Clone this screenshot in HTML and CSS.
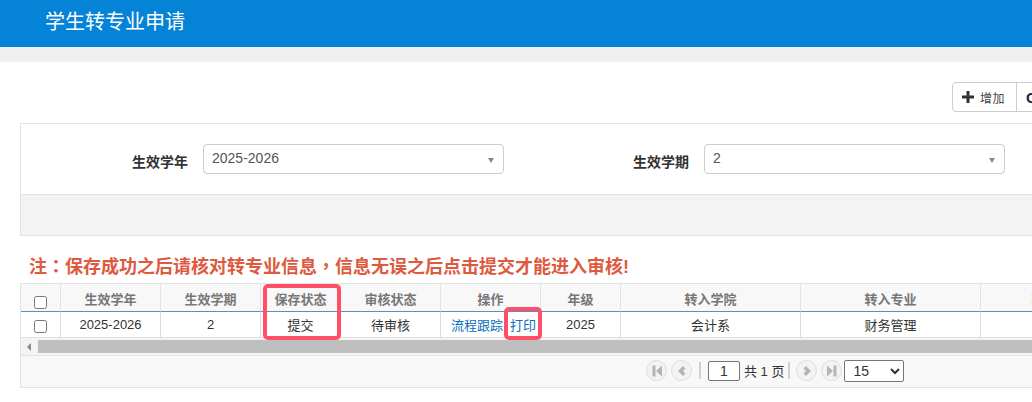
FILE: index.html
```html
<!DOCTYPE html>
<html lang="zh-CN">
<head>
<meta charset="utf-8">
<title>学生转专业申请</title>
<link rel="stylesheet" href="styles.css">
</head>
<body>
<div class="page">
  <header class="topbar"><h1 class="title">学生转专业申请</h1></header>
  <div class="strip"></div>
  <main class="content">
    <div class="toolbar">
      <button class="tool tool-add" type="button">
        <svg class="plus" viewBox="0 0 12 12" width="12" height="12"><path d="M4.5 0h3v4.5H12v3H7.5V12h-3V7.5H0v-3h4.5z"/></svg>
        <span>增加</span>
      </button>
      <button class="tool tool-next" type="button"><span class="tool-glyph">O</span></button>
    </div>
    <section class="panel">
      <div class="form-row">
        <div class="field">
          <label class="field-label">生效学年</label>
          <div class="fake-select"><span>2025-2026</span><i class="caret"></i></div>
        </div>
        <div class="field">
          <label class="field-label">生效学期</label>
          <div class="fake-select"><span>2</span><i class="caret"></i></div>
        </div>
      </div>
      <div class="panel-foot"></div>
    </section>
    <p class="note">注<span class="punct" lang="zh-TW">：</span>保存成功之后请核对转专业信息<span class="punct" lang="zh-TW">，</span>信息无误之后点击提交才能进入审核!</p>
    <section class="grid-wrap">
      <table class="grid">
        <colgroup>
          <col class="c40"><col class="c100"><col class="c100"><col class="c80"><col class="c100"><col class="c100"><col class="c80"><col class="c180"><col class="c180"><col class="c154">
        </colgroup>
        <thead>
          <tr>
            <th><input class="check check-head" type="checkbox"></th>
            <th>生效学年</th><th>生效学期</th><th>保存状态</th><th>审核状态</th><th>操作</th><th>年级</th><th>转入学院</th><th>转入专业</th><th>转入班级</th>
          </tr>
        </thead>
        <tbody>
          <tr>
            <td><input class="check" type="checkbox"></td>
            <td>2025-2026</td><td>2</td><td>提交</td><td>待审核</td>
            <td class="ops"><a href="#">流程跟踪</a><a class="print" href="#">打印</a></td>
            <td>2025</td><td>会计系</td><td>财务管理</td><td></td>
          </tr>
        </tbody>
      </table>
      <div class="scrollbar">
        <span class="scroll-arrow"></span>
        <div class="scroll-thumb"></div>
      </div>
      <div class="pager">
        <button class="pg" type="button"><svg viewBox="0 0 12 12" width="12" height="12"><path d="M1.5 .5h3v11h-3zM5 6l6-5.500v11z"/></svg></button>
        <button class="pg" type="button"><svg viewBox="0 0 12 12" width="12" height="12"><path d="M7 1l2.500 2.500L7 6l2.500 2.500L7 11 2 6z"/></svg></button>
        <span class="sep"></span>
        <input class="pg-input" type="text" value="1">
        <span class="pg-text">共 1 页</span>
        <span class="sep sep-b"></span>
        <button class="pg pg-next" type="button"><svg viewBox="0 0 12 12" width="12" height="12"><path d="M5 1l5 5-5 5-2.500-2.500L5 6 2.500 3.500z"/></svg></button>
        <button class="pg" type="button"><svg viewBox="0 0 12 12" width="12" height="12"><path d="M1 .5l6 5.500-6 5.500zM7.500 .5h3v11h-3z"/></svg></button>
        <select class="pg-size"><option>15</option></select>
      </div>
      <div class="mark mark-status"></div>
      <div class="mark mark-print"></div>
    </section>
  </main>
</div>
</body>
</html>
```
FILE: styles.css
```css
* { box-sizing: border-box; }
html, body { margin: 0; padding: 0; height: 100%; overflow: hidden; background: #fff; }
body { font-family: "Liberation Sans", "Noto Sans CJK SC", sans-serif; font-size: 13px; color: #333; }
.page { width: 1032px; overflow: hidden; }
.topbar { height: 47px; background: #0583d6; padding-left: 45px; }
.title { margin: 0; font-size: 20px; font-weight: 400; line-height: 45px; color: #fff; }
.strip { height: 15px; background: #efefef; }
.content { padding: 0 0 0 20px; width: 1300px; }

.toolbar { display: flex; justify-content: flex-start; height: 61px; padding: 20px 0 0 932px; }
.tool { height: 30px; background: #fff; border: 1px solid #ccc; padding: 0; color: #444; font: 12px "Liberation Sans", "Noto Sans CJK SC", sans-serif; display: flex; align-items: center; }
.tool-add { width: 65px; border-radius: 4px 0 0 4px; padding-left: 9px; gap: 6px; letter-spacing: .5px; }
.tool-next { width: 60px; margin-left: -1px; padding-left: 9px; }
.tool-glyph { font-size: 15px; font-weight: 700; color: #222244; }
.plus { fill: #333; flex: none; }

.panel { border: 1px solid #e3e3e3; height: 113px; }
.form-row { height: 70px; display: flex; padding-top: 20px; }
.field { width: 501px; display: flex; align-items: flex-start; flex: none; }
.field-label { width: 167px; text-align: right; font-weight: 700; font-size: 14px; color: #333; line-height: 36px; margin-right: 15px; flex: none; }
.fake-select { width: 301px; height: 30px; border: 1px solid #ccc; border-radius: 4px; padding: 0 8px; display: flex; justify-content: space-between; align-items: center; font-size: 14px; color: #555; background: #fff; }
.fake-select span { position: relative; top: -1px; }
.caret { width: 0; height: 0; border-left: 3.5px solid transparent; border-right: 3.5px solid transparent; border-top: 5px solid #888; margin: 2px 1px 0 0; }
.panel-foot { height: 41px; background: #f3f3f3; border-top: 1px solid #e3e3e3; }

.note { margin: 0; height: 47px; padding: 17px 0 0 9px; font-size: 18px; font-weight: 700; line-height: 24px; color: #dd5a3f; white-space: nowrap; }
.punct { font-family: "Noto Sans CJK TC", sans-serif; }

.grid-wrap { position: relative; width: 1200px; border: 1px solid #e3e3e3; height: 105px; background: #f8f8f8; }
.grid { table-layout: fixed; border-collapse: separate; border-spacing: 0; width: 1114px; background: #fff; }
.c40 { width: 40px; } .c100 { width: 100px; } .c80 { width: 80px; } .c180 { width: 180px; } .c154 { width: 154px; }
.grid th { height: 28px; background: #f8f8f8; color: #777; font-size: 13px; font-weight: 700; border-right: 1px solid #e3e3e3; border-bottom: 1px solid #5b8fc0; padding: 2px 0 0; text-align: center; }
.grid td { height: 26px; color: #333; font-size: 13px; font-weight: 400; border-right: 1px solid #ddd; border-bottom: 1px solid #e3e3e3; padding: 0; text-align: center; background: #fff; }
.check { width: 13px; height: 13px; margin: 3px 0 0; vertical-align: middle; }
.check-head { margin-top: 7px; }
.grid .ops { padding-left: 6px; }
.ops a { color: #0a6ebd; text-decoration: none; }
.ops .print { margin-left: 7px; }

.scrollbar { height: 18px; background: #f4f4f4; border-bottom: 1px solid #e3e3e3; padding: 2px 0 0 17px; position: relative; width: 100%; }
.scroll-arrow { position: absolute; left: 6px; top: 5px; width: 0; height: 0; border-top: 4px solid transparent; border-bottom: 4px solid transparent; border-right: 4px solid #888; }
.scroll-thumb { height: 13px; background: #bfbfbf; }

.pager { height: 31px; display: flex; align-items: center; padding: 0 0 2px 625px; background: #f8f8f8; }
.pg { width: 21px; height: 21px; border-radius: 50%; border: 1px solid #ddd; background: #f3f3f3; padding: 0; margin-right: 4px; display: flex; align-items: center; justify-content: center; flex: none; }
.pg svg { fill: #b5b5b5; }
.pg-next { margin-left: 6px; }
.sep { width: 2px; height: 17px; background: #c8d3dd; margin: 0 7px 0 3px; flex: none; }
.sep-b { margin: 0 0 0 4px; }
.pg-input { width: 32px; height: 20px; border: 1px solid #767676; border-radius: 2px; text-align: center; font: 14px "Liberation Sans", sans-serif; color: #333; padding: 0; background: #fff; flex: none; }
.pg-text { margin-left: 4px; font-size: 13px; color: #333; white-space: nowrap; }
.pg-size { width: 60px; height: 22px; margin-left: -2px; font: 14px "Liberation Sans", sans-serif; background: #fff; border: 1px solid #767676; border-radius: 2px; color: #333; padding-left: 4px; flex: none; }

.mark { position: absolute; border: 4px solid #ff5068; border-radius: 5px; pointer-events: none; }
.mark-status { left: 242px; top: 0; width: 78px; height: 56px; }
.mark-print { left: 483px; top: 23px; width: 38px; height: 33px; }
```
